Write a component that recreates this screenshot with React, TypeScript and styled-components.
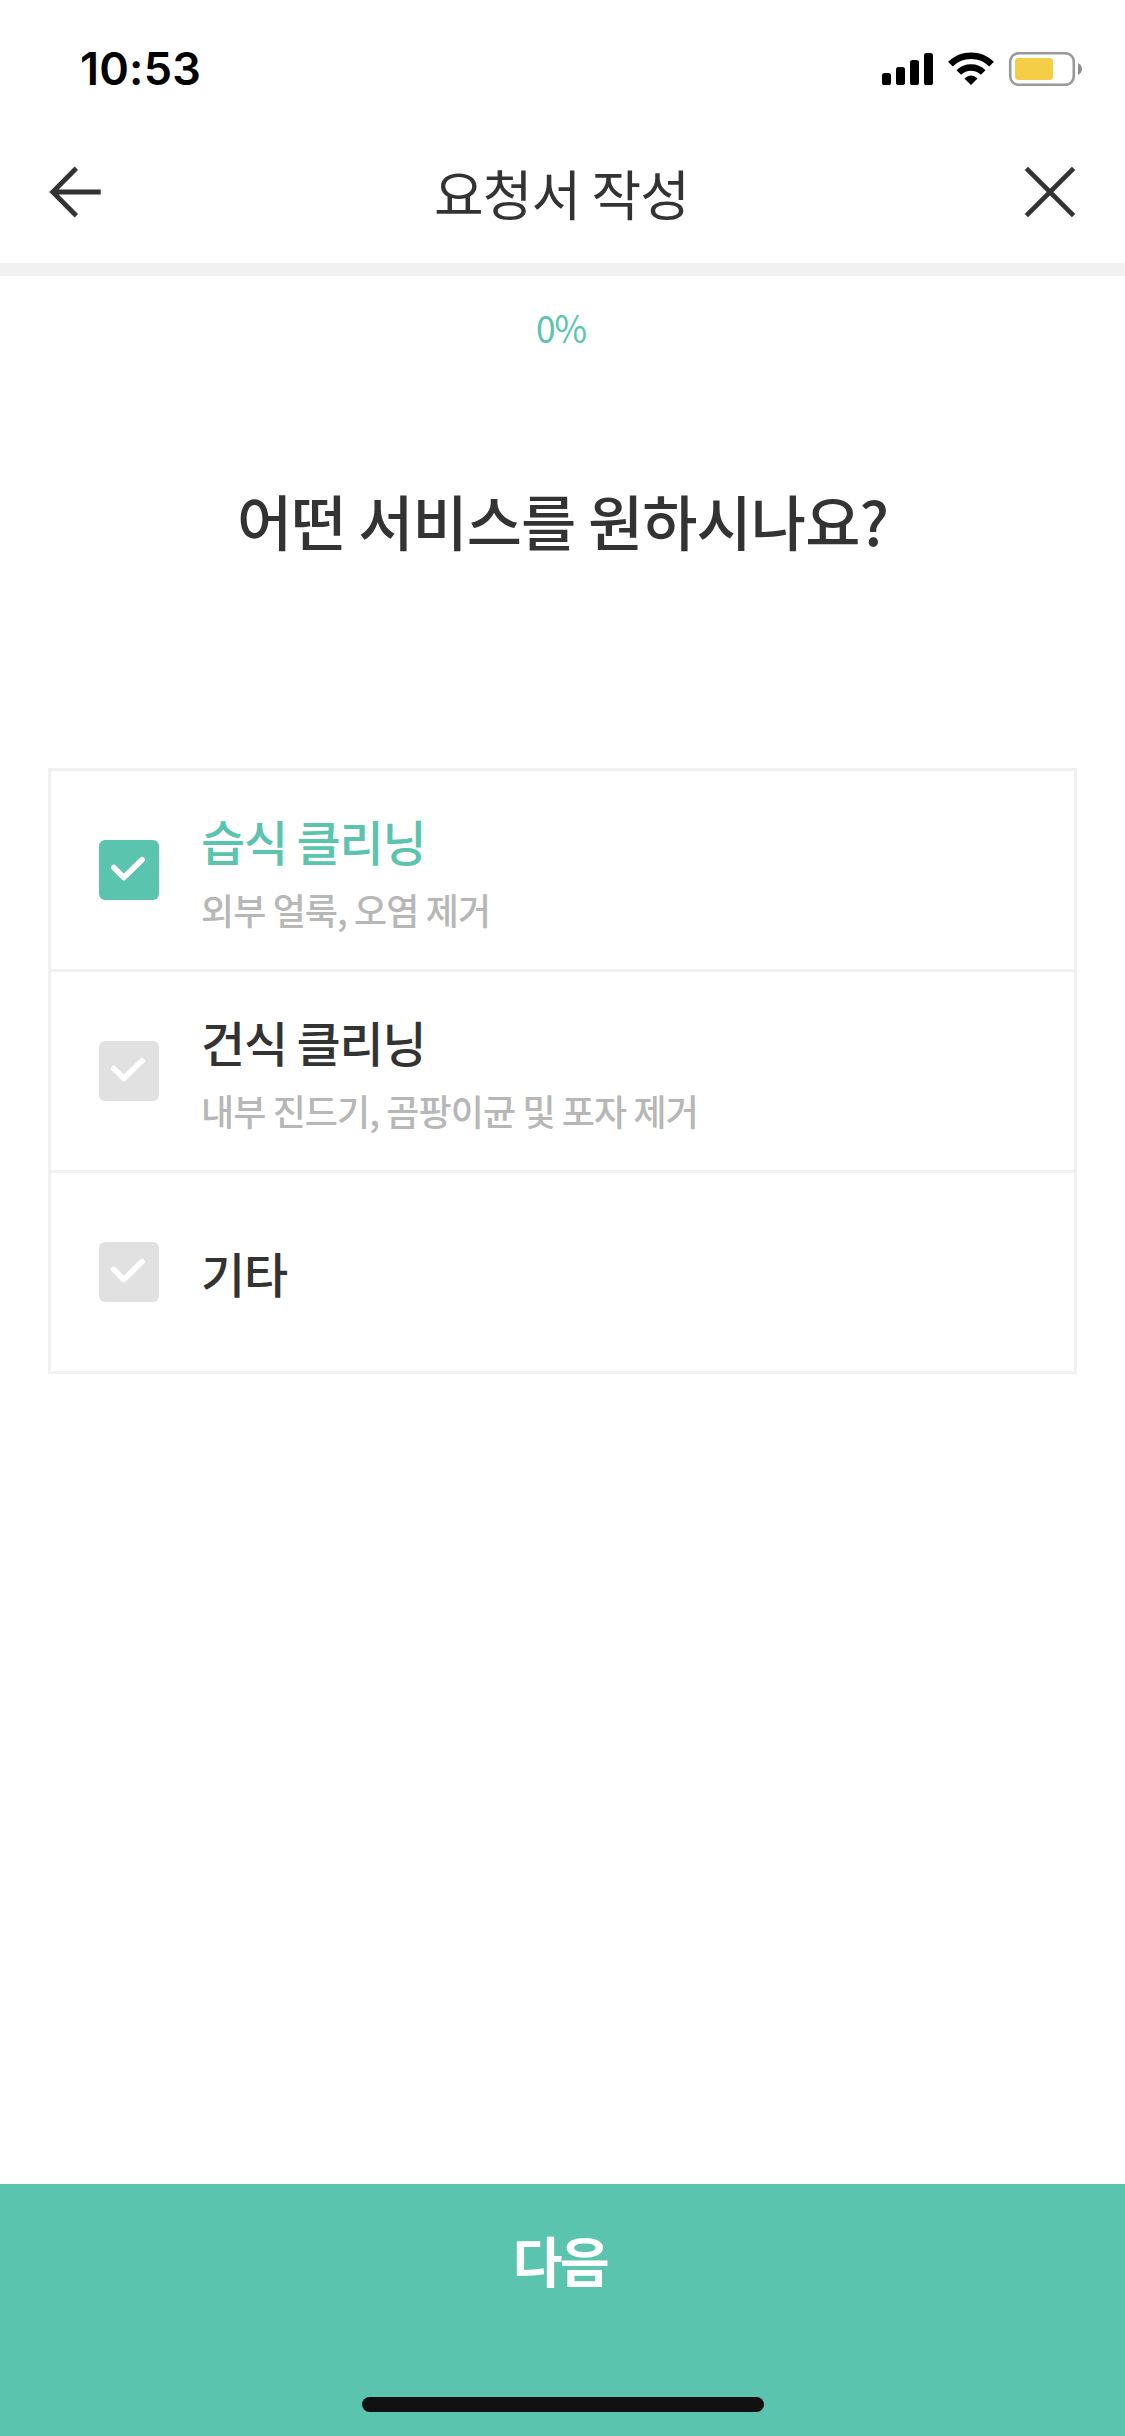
import React, { useState } from "react";
import styled, { createGlobalStyle } from "styled-components";

const mint = "#5bc4af";
const ink = "#333333";
const line = "#f1f1f1";

const GlobalStyle = createGlobalStyle`
  *, *::before, *::after { box-sizing: border-box; }
  body { margin: 0; background: #fff; }
`;

const Screen = styled.div`
  display: flex;
  flex-direction: column;
  width: 1125px;
  height: 2436px;
  background: #fff;
  color: ${ink};
  font-family: "Noto Sans CJK KR", sans-serif;
  letter-spacing: -0.9px;
  overflow: hidden;
`;

const StatusBar = styled.div`
  display: flex;
  justify-content: space-between;
  align-items: center;
  height: 132px;
  padding: 6px 43px 0 80px;
`;

const Clock = styled.span`
  font: 600 45px/54px Inter, sans-serif;
  letter-spacing: 0.2px;
  color: #000;
`;

const StatusIcons = styled.div`
  display: flex;
  align-items: center;
  height: 34px;
`;

const Header = styled.header`
  display: flex;
  justify-content: space-between;
  align-items: center;
  height: 131px;
  padding: 0 48px;
`;

const IconButton = styled.button`
  display: flex;
  width: 54px;
  height: 54px;
  margin-top: -11px;
  padding: 0;
  border: 0;
  background: none;
  color: ${ink};
`;

const Title = styled.h1`
  margin: -9px 0 0;
  padding-right: 2px;
  font-size: 54px;
  line-height: 80px;
  font-weight: 400;
`;

const ProgressTrack = styled.div`
  height: 13px;
  background: ${line};
`;

const Main = styled.main`
  display: flex;
  flex-direction: column;
  align-items: center;
  flex: 1;
`;

const Percent = styled.div`
  margin-top: 24px;
  padding-right: 4px;
  font-size: 38px;
  line-height: 54px;
  letter-spacing: -1.2px;
  transform: scaleX(0.93);
  color: ${mint};
`;

const Question = styled.h2`
  margin: 121px 0 0;
  font-size: 60px;
  line-height: 90px;
  font-weight: 500;
`;

const OptionList = styled.div`
  width: 1029px;
  margin-top: 203px;
  border: 3px solid ${line};
`;

const Option = styled.div`
  display: flex;
  align-items: center;
  height: 201px;
  padding-left: 48px;
  gap: 42px;
  border-bottom: 3px solid ${line};

  &:last-child {
    height: 198px;
    border-bottom: 0;
  }
`;

const CheckBox = styled.button<{ $on: boolean }>`
  display: flex;
  width: 60px;
  height: 60px;
  padding: 0;
  border: 0;
  border-radius: 6px;
  background: ${(p) => (p.$on ? mint : "#e1e1e1")};
`;

const OptionText = styled.div`
  display: flex;
  flex-direction: column;
`;

const OptionName = styled.div<{ $on: boolean }>`
  font-size: 48px;
  line-height: 72px;
  font-weight: 500;
  letter-spacing: -1.2px;
  color: ${(p) => (p.$on ? mint : ink)};
`;

const OptionNote = styled.div`
  margin-top: 6px;
  font-size: 36px;
  line-height: 54px;
  font-weight: 500;
  color: #b7b7b7;
`;

const Footer = styled.footer`
  display: flex;
  flex-direction: column;
  align-items: center;
  justify-content: space-between;
  height: 252px;
  padding: 36px 0 24px;
  background: ${mint};
`;

const NextButton = styled.button`
  padding: 0 5px 0 0;
  border: 0;
  background: none;
  color: #fff;
  font: inherit;
  font-size: 54px;
  line-height: 80px;
  font-weight: 700;
  letter-spacing: -2.4px;
`;

const HomeIndicator = styled.div`
  width: 402px;
  height: 15px;
  border-radius: 8px;
  background: #111;
`;

const options = [
  { name: "습식 클리닝", note: "외부 얼룩, 오염 제거" },
  { name: "건식 클리닝", note: "내부 진드기, 곰팡이균 및 포자 제거" },
  { name: "기타" },
];

const StatusGlyphs = () => (
  <svg width="200" height="34" viewBox="882 52 200 34">
    <rect x="882" y="73" width="9" height="12" rx="2.6" />
    <rect x="896" y="67" width="9" height="18" rx="2.6" />
    <rect x="910" y="60" width="9" height="25" rx="2.6" />
    <rect x="924" y="53" width="9" height="32" rx="2.6" />
    <g fill="none" stroke="#000" strokeWidth="6.6">
      <path d="M950.4 64.2A29.4 29.4 0 0 1 991.6 64.2" />
      <path d="M958.8 72.5A17.5 17.5 0 0 1 983.2 72.5" />
    </g>
    <path d="M964.4 78.4Q971 72.6 977.6 78.4L971 85Z" />
    <rect x="1010.2" y="53.2" width="63.6" height="31.6" rx="8.5" fill="none" stroke="#999" strokeWidth="2.6" />
    <rect x="1015" y="58" width="38" height="22" rx="3.5" fill="#f6cd46" />
    <path d="M1078 63Q1082 65.2 1082 69T1078 75Z" fill="#8e8e8e" />
  </svg>
);

export default function App() {
  const [selected, setSelected] = useState(0);
  return (
    <>
      <GlobalStyle />
      <Screen>
        <StatusBar>
          <Clock>10:53</Clock>
          <StatusIcons>
            <StatusGlyphs />
          </StatusIcons>
        </StatusBar>
        <Header>
          <IconButton aria-label="back">
            <svg width="54" height="54" viewBox="0 0 54 54" fill="none" stroke="currentColor" strokeWidth="4.8">
              <path d="M28.3 3.2L4.7 27L28.3 50.8M5 27H52.7" />
            </svg>
          </IconButton>
          <Title>요청서 작성</Title>
          <IconButton aria-label="close">
            <svg width="54" height="54" viewBox="0 0 54 54" fill="none" stroke="currentColor" strokeWidth="4.8">
              <path d="M3.4 3.4L50.6 50.6M50.6 3.4L3.4 50.6" />
            </svg>
          </IconButton>
        </Header>
        <ProgressTrack />
        <Main>
          <Percent>0%</Percent>
          <Question>어떤 서비스를 원하시나요?</Question>
          <OptionList>
            {options.map((o, i) => (
              <Option key={o.name}>
                <CheckBox $on={i === selected} aria-label={o.name} onClick={() => setSelected(i)}>
                  <svg width="60" height="60" viewBox="0 0 60 60" fill="none" stroke="#fff" strokeWidth="5.6" strokeLinecap="round" strokeLinejoin="round">
                    <path d="M14.8 27.5L24.8 37.6L43 19.8" />
                  </svg>
                </CheckBox>
                <OptionText>
                  <OptionName $on={i === selected}>{o.name}</OptionName>
                  {o.note && <OptionNote>{o.note}</OptionNote>}
                </OptionText>
              </Option>
            ))}
          </OptionList>
        </Main>
        <Footer>
          <NextButton>다음</NextButton>
          <HomeIndicator />
        </Footer>
      </Screen>
    </>
  );
}
